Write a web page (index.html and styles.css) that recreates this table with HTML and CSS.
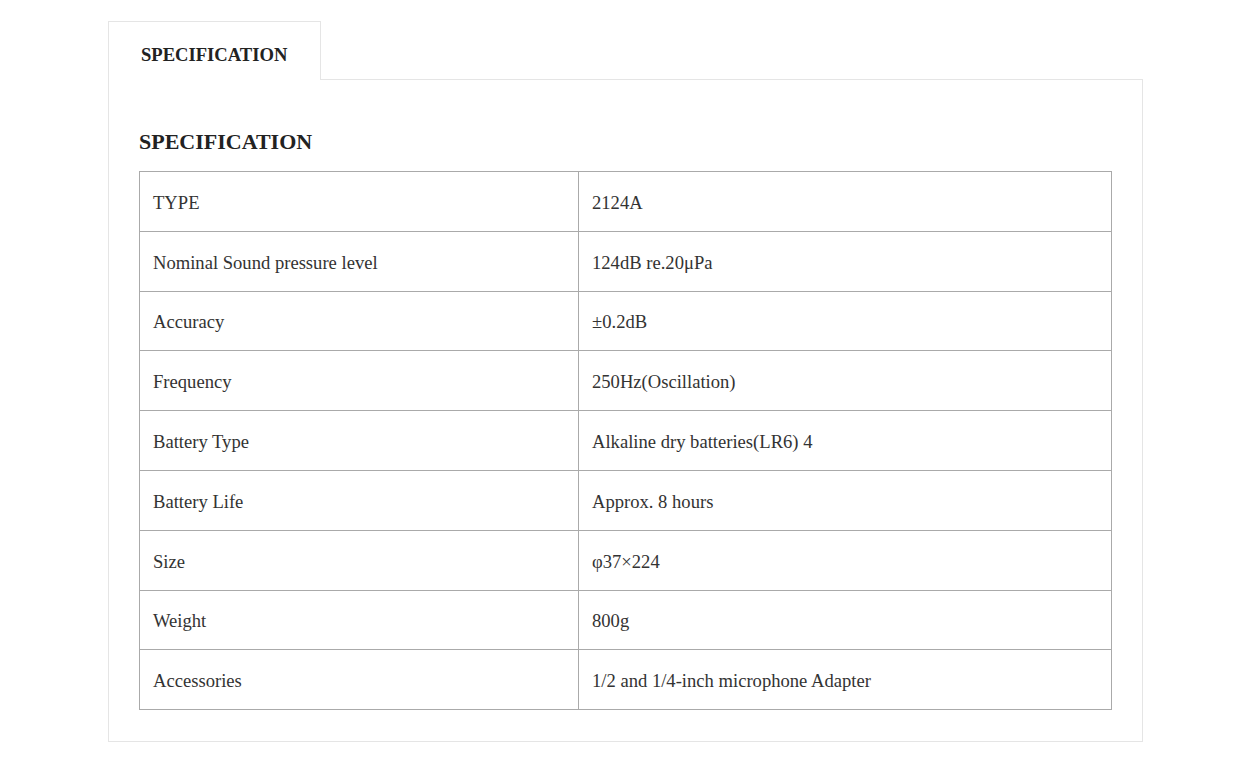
FILE: index.html
```html
<!DOCTYPE html>
<html>
<head>
<meta charset="utf-8">
<link rel="stylesheet" href="styles.css">
</head>
<body>
<div class="wrap">
  <div class="tabs">
    <div class="tab">SPECIFICATION</div>
  </div>
  <div class="panel">
    <h2 class="title">SPECIFICATION</h2>
    <table class="spec">
      <tr><td class="k">TYPE</td><td>2124A</td></tr>
      <tr><td class="k">Nominal Sound pressure level</td><td>124dB re.20μPa</td></tr>
      <tr><td class="k">Accuracy</td><td>±0.2dB</td></tr>
      <tr><td class="k">Frequency</td><td>250Hz(Oscillation)</td></tr>
      <tr><td class="k">Battery Type</td><td>Alkaline dry batteries(LR6) 4</td></tr>
      <tr><td class="k">Battery Life</td><td>Approx. 8 hours</td></tr>
      <tr><td class="k">Size</td><td>φ37×224</td></tr>
      <tr><td class="k">Weight</td><td>800g</td></tr>
      <tr><td class="k">Accessories</td><td>1/2 and 1/4-inch microphone Adapter</td></tr>
    </table>
  </div>
</div>
</body>
</html>
```
FILE: styles.css
```css
html, body {
  margin: 0;
  padding: 0;
  background: #fff;
}
body {
  font-family: "Liberation Serif", "Times New Roman", serif;
  color: #333;
}
.wrap {
  width: 1035px;
  margin-left: 108px;
  padding-top: 21px;
}
.tabs {
  display: flex;
}
.tab {
  width: 213px;
  height: 59px;
  box-sizing: border-box;
  border: 1px solid #e5e5e5;
  border-bottom: none;
  padding: 21px 0 0 32px;
  font-weight: bold;
  font-size: 18.6px;
  line-height: 24px;
  color: #222;
  background: #fff;
  position: relative;
  z-index: 1;
  margin-bottom: -1px;
}
.panel {
  border: 1px solid #e5e5e5;
  padding: 49px 30px 31px 30px;
}
.title {
  margin: 0 0 16px 0;
  font-size: 22px;
  font-weight: bold;
  line-height: 26px;
  color: #222;
}
.spec {
  width: 973px;
  border-collapse: collapse;
  font-size: 18.6px;
}
.spec td {
  border: 1px solid #aaa;
  height: 59.8px;
  padding: 3px 13px 0 13px;
  vertical-align: middle;
  box-sizing: border-box;
}
.spec td.k {
  width: 439px;
}
```
